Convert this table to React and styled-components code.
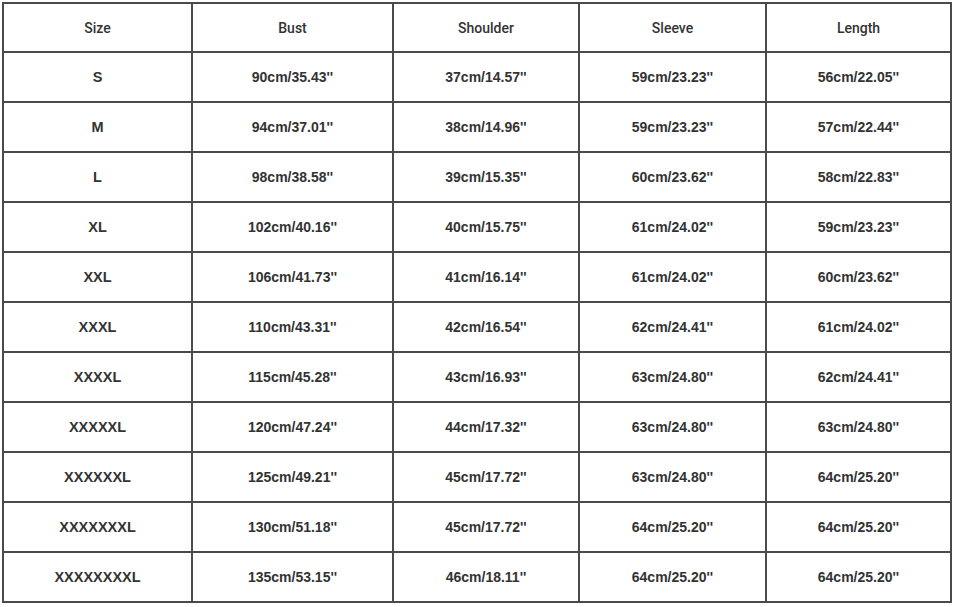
import React from "react";
import styled, { createGlobalStyle } from "styled-components";

const Global = createGlobalStyle`
  html, body { margin: 0; padding: 0; background: #fff; }
  body { font-family: "Liberation Sans", Arial, sans-serif; }
`;

const Page = styled.div`
  padding: 2px;
  width: 954px;
  height: 607px;
  box-sizing: border-box;
  background: #fff;
`;

const Table = styled.table`
  border-collapse: collapse;
  table-layout: fixed;
  width: 950px;
  border: 2px solid #4a4a4a;
`;

const HeadRow = styled.tr`
  height: 49px;
`;

const Row = styled.tr`
  height: 50px;
`;

const HeadCell = styled.th`
  border: 2px solid #4a4a4a;
  font-family: Roboto, "Liberation Sans", sans-serif;
  font-weight: 500;
  font-size: 14px;
  color: #333;
  text-align: center;
  padding: 0;
`;

const Cell = styled.td`
  border: 2px solid #4a4a4a;
  font-family: "Liberation Sans", Arial, sans-serif;
  font-weight: 700;
  font-size: ${(p) => (p.$first ? "14.5px" : "14px")};
  color: #333;
  text-align: center;
  padding: 0;
`;

const cols = [189, 201, 186, 187, 185];
const headers = ["Size", "Bust", "Shoulder", "Sleeve", "Length"];
const rows = [
  ["S", "90cm/35.43''", "37cm/14.57''", "59cm/23.23''", "56cm/22.05''"],
  ["M", "94cm/37.01''", "38cm/14.96''", "59cm/23.23''", "57cm/22.44''"],
  ["L", "98cm/38.58''", "39cm/15.35''", "60cm/23.62''", "58cm/22.83''"],
  ["XL", "102cm/40.16''", "40cm/15.75''", "61cm/24.02''", "59cm/23.23''"],
  ["XXL", "106cm/41.73''", "41cm/16.14''", "61cm/24.02''", "60cm/23.62''"],
  ["XXXL", "110cm/43.31''", "42cm/16.54''", "62cm/24.41''", "61cm/24.02''"],
  ["XXXXL", "115cm/45.28''", "43cm/16.93''", "63cm/24.80''", "62cm/24.41''"],
  ["XXXXXL", "120cm/47.24''", "44cm/17.32''", "63cm/24.80''", "63cm/24.80''"],
  ["XXXXXXL", "125cm/49.21''", "45cm/17.72''", "63cm/24.80''", "64cm/25.20''"],
  ["XXXXXXXL", "130cm/51.18''", "45cm/17.72''", "64cm/25.20''", "64cm/25.20''"],
  ["XXXXXXXXL", "135cm/53.15''", "46cm/18.11''", "64cm/25.20''", "64cm/25.20''"],
];

export default function App() {
  return (
    <Page>
      <Global />
      <Table>
        <colgroup>
          {cols.map((w, i) => (
            <col key={i} style={{ width: w }} />
          ))}
        </colgroup>
        <thead>
          <HeadRow>
            {headers.map((h) => (
              <HeadCell key={h}>{h}</HeadCell>
            ))}
          </HeadRow>
        </thead>
        <tbody>
          {rows.map((r) => (
            <Row key={r[0]}>
              {r.map((c, i) => (
                <Cell key={i} $first={i === 0}>
                  {c}
                </Cell>
              ))}
            </Row>
          ))}
        </tbody>
      </Table>
    </Page>
  );
}
